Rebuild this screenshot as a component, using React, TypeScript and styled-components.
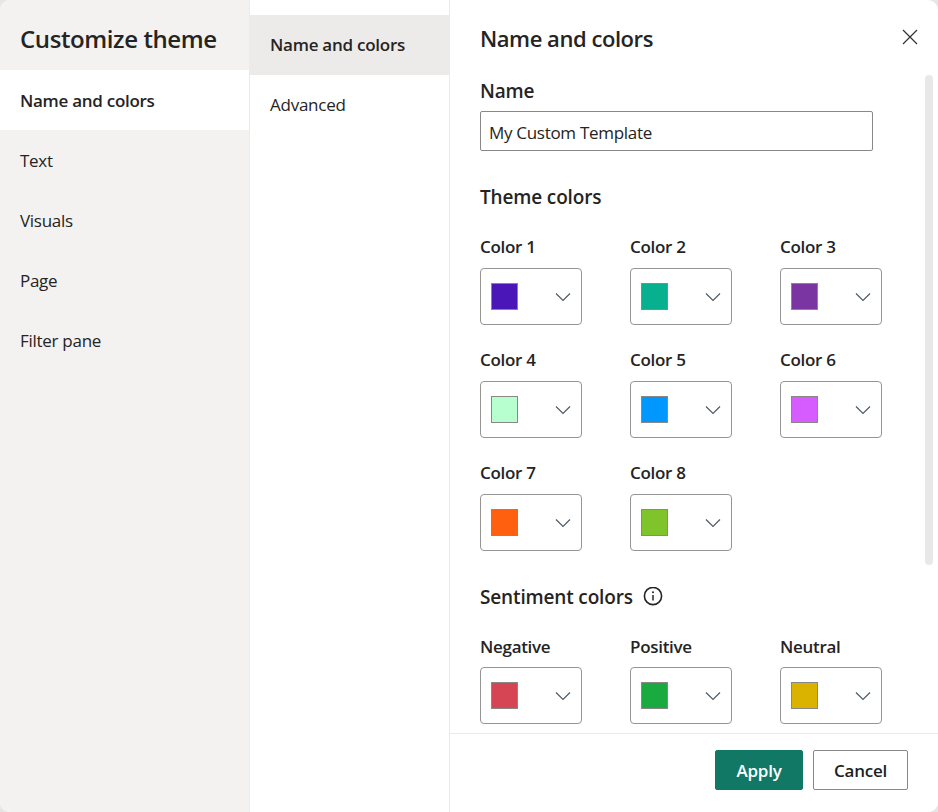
import React from "react";
import styled, { createGlobalStyle } from "styled-components";

const GlobalStyle = createGlobalStyle`
  html, body {
    margin: 0;
    padding: 0;
    background: #e6e6e6;
  }
  * {
    box-sizing: border-box;
  }
`;

const Dialog = styled.div`
  width: 938px;
  height: 812px;
  display: flex;
  background: #fff;
  border-radius: 10px;
  overflow: hidden;
  font-family: "Open Sans", "Noto Sans", sans-serif;
  color: #252423;
`;

const LeftNav = styled.nav`
  width: 250px;
  flex: none;
  background: #f3f2f1;
  border-right: 1px solid #edebe9;
`;

const NavTitle = styled.h1`
  margin: 0;
  height: 70px;
  padding: 21px 0 0 20px;
  font-size: 24px;
  line-height: 36px;
  font-weight: 600;
  letter-spacing: -0.4px;
`;

const NavItem = styled.div<{ $active?: boolean }>`
  height: 60px;
  display: flex;
  align-items: center;
  padding-left: 20px;
  font-size: 17px;
  letter-spacing: -0.28px;
  font-weight: ${(p) => (p.$active ? 600 : 400)};
  background: ${(p) => (p.$active ? "#fff" : "transparent")};
`;

const SubNav = styled.nav`
  width: 200px;
  flex: none;
  padding-top: 15px;
  background: #fff;
  border-right: 1px solid #edebe9;
`;

const SubItem = styled.div<{ $active?: boolean }>`
  height: 60px;
  display: flex;
  align-items: center;
  padding: 0 0 2px 20px;
  font-size: 17px;
  letter-spacing: -0.25px;
  font-weight: ${(p) => (p.$active ? 600 : 400)};
  background: ${(p) => (p.$active ? "#edebe9" : "transparent")};
`;

const Panel = styled.section`
  flex: 1;
  display: flex;
  flex-direction: column;
  position: relative;
  min-width: 0;
`;

const PanelBody = styled.div`
  flex: 1;
  padding: 0 0 0 30px;
  overflow: hidden;
`;

const PanelTitle = styled.h2`
  margin: 0;
  padding-top: 21px;
  height: 79px;
  font-size: 22px;
  line-height: 34px;
  font-weight: 600;
  letter-spacing: -0.45px;
`;

const CloseButton = styled.button`
  position: absolute;
  top: 28px;
  right: 20px;
  width: 16px;
  height: 20px;
  padding: 0;
  border: none;
  background: none;
  color: #323130;
`;

const Scrollbar = styled.div`
  position: absolute;
  top: 75px;
  right: 5px;
  width: 8px;
  height: 490px;
  border-radius: 4px;
  background: #e8e8e8;
`;

const FieldLabel = styled.label`
  display: block;
  font-size: 19px;
  line-height: 24px;
  font-weight: 600;
  letter-spacing: -0.15px;
  margin-bottom: 8px;
`;

const TextInput = styled.input`
  display: block;
  width: 393px;
  height: 40px;
  padding: 2px 8px 0;
  border: 1px solid #8a8886;
  border-radius: 2px;
  outline: none;
  font-family: inherit;
  font-size: 17px;
  letter-spacing: -0.3px;
  color: #252423;
`;

const SectionTitle = styled.div<{ $top: number }>`
  display: flex;
  align-items: center;
  gap: 10px;
  margin-top: ${(p) => p.$top}px;
  height: 24px;
  font-size: 19px;
  font-weight: 600;
  letter-spacing: -0.15px;
`;

const ColorGrid = styled.div<{ $top: number }>`
  display: grid;
  grid-template-columns: repeat(3, 102px);
  column-gap: 48px;
  row-gap: 23px;
  margin-top: ${(p) => p.$top}px;
`;

const ColorCell = styled.div`
  display: flex;
  flex-direction: column;
`;

const ColorLabel = styled.span<{ $gap: number }>`
  height: 24px;
  margin-bottom: ${(p) => p.$gap}px;
  font-size: 17px;
  line-height: 24px;
  font-weight: 600;
  letter-spacing: -0.3px;
`;

const ColorSelect = styled.div`
  width: 102px;
  height: 57px;
  padding: 0 10px;
  display: flex;
  align-items: center;
  justify-content: space-between;
  border: 1px solid #979593;
  border-radius: 4px;
  background: #fff;
`;

const Swatch = styled.span<{ $color: string }>`
  width: 27px;
  height: 27px;
  background: ${(p) => p.$color};
  border: 1px solid #8a8886;
`;

const Footer = styled.footer`
  height: 79px;
  flex: none;
  border-top: 1px solid #edebe9;
  padding: 16px 30px 0 0;
  display: flex;
  justify-content: flex-end;
  gap: 10px;
  background: #fff;
`;

const ActionButton = styled.button<{ $primary?: boolean }>`
  height: 40px;
  width: ${(p) => (p.$primary ? 88 : 95)}px;
  border-radius: 2px;
  border: 1px solid ${(p) => (p.$primary ? "#117865" : "#8a8886")};
  background: ${(p) => (p.$primary ? "#117865" : "#fff")};
  color: ${(p) => (p.$primary ? "#fff" : "#201f1e")};
  font-family: inherit;
  font-size: 17px;
  font-weight: 600;
  letter-spacing: -0.2px;
  padding-top: 2px;
`;

const ChevronIcon = styled.svg`
  display: block;
  margin-top: 1px;
`;

const Chevron = () => (
  <ChevronIcon width="16" height="10" viewBox="0 0 16 10" fill="none" stroke="#4d5a66" strokeWidth="1.2">
    <path d="M1 1.5 8 8.5 15 1.5" />
  </ChevronIcon>
);

const CloseIcon = () => (
  <svg width="16" height="16" viewBox="0 0 16 16" fill="none" stroke="#323130" strokeWidth="1.2">
    <path d="M1 1 15 15M15 1 1 15" />
  </svg>
);

const InfoIcon = () => (
  <svg width="20" height="20" viewBox="0 0 20 20" fill="none" stroke="#252423">
    <circle cx="10" cy="9" r="8.6" strokeWidth="1.6" />
    <path d="M10 8v5.5" strokeWidth="1.5" />
    <circle cx="10" cy="5.2" r="1" fill="#252423" stroke="none" />
  </svg>
);

const themeColors = [
  { name: "Color 1", color: "#4a16b8" },
  { name: "Color 2", color: "#07b08f" },
  { name: "Color 3", color: "#7a35a3" },
  { name: "Color 4", color: "#b8ffcf" },
  { name: "Color 5", color: "#0097ff" },
  { name: "Color 6", color: "#d65cff" },
  { name: "Color 7", color: "#ff6010" },
  { name: "Color 8", color: "#7fc42b" },
];

const sentimentColors = [
  { name: "Negative", color: "#d64554" },
  { name: "Positive", color: "#1aab40" },
  { name: "Neutral", color: "#d9b300" },
];

const ColorField = ({ name, color, gap }: { name: string; color: string; gap: number }) => (
  <ColorCell>
    <ColorLabel $gap={gap}>{name}</ColorLabel>
    <ColorSelect>
      <Swatch $color={color} />
      <Chevron />
    </ColorSelect>
  </ColorCell>
);

const App: React.FC = () => {
  return (
    <>
      <GlobalStyle />
      <Dialog>
        <LeftNav>
          <NavTitle>Customize theme</NavTitle>
          <NavItem $active>Name and colors</NavItem>
          <NavItem>Text</NavItem>
          <NavItem>Visuals</NavItem>
          <NavItem>Page</NavItem>
          <NavItem>Filter pane</NavItem>
        </LeftNav>
        <SubNav>
          <SubItem $active>Name and colors</SubItem>
          <SubItem>Advanced</SubItem>
        </SubNav>
        <Panel>
          <PanelBody>
            <PanelTitle>Name and colors</PanelTitle>
            <FieldLabel>Name</FieldLabel>
            <TextInput defaultValue="My Custom Template" />
            <SectionTitle $top={34}>Theme colors</SectionTitle>
            <ColorGrid $top={26}>
              {themeColors.map((c) => (
                <ColorField key={c.name} name={c.name} color={c.color} gap={9} />
              ))}
            </ColorGrid>
            <SectionTitle $top={34}>
              Sentiment colors
              <InfoIcon />
            </SectionTitle>
            <ColorGrid $top={26}>
              {sentimentColors.map((c) => (
                <ColorField key={c.name} name={c.name} color={c.color} gap={8} />
              ))}
            </ColorGrid>
          </PanelBody>
          <CloseButton>
            <CloseIcon />
          </CloseButton>
          <Scrollbar />
          <Footer>
            <ActionButton $primary>Apply</ActionButton>
            <ActionButton>Cancel</ActionButton>
          </Footer>
        </Panel>
      </Dialog>
    </>
  );
};

export default App;
